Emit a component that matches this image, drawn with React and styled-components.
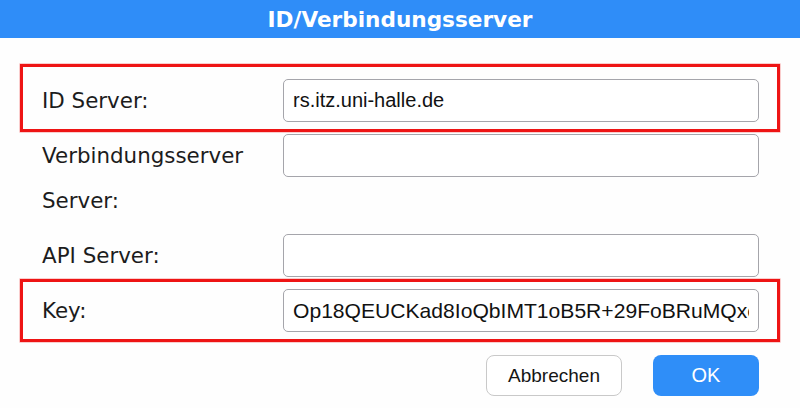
import React from "react";
import styled, { createGlobalStyle, css } from "styled-components";

const GlobalStyle = createGlobalStyle`
  html, body {
    margin: 0;
    padding: 0;
    background: #ffffff;
  }
  * { box-sizing: border-box; }
`;

const Dialog = styled.div`
  width: 800px;
  height: 408px;
  display: flex;
  flex-direction: column;
  background: #fefefe;
  overflow: hidden;
`;

const Header = styled.header`
  height: 38px;
  flex: 0 0 38px;
  display: flex;
  align-items: center;
  justify-content: center;
  background: #2f8df8;
  color: #ffffff;
  font-family: "DejaVu Sans", Verdana, sans-serif;
  font-weight: bold;
  font-size: 21.6px;
`;

const Body = styled.div`
  padding: 41px 41px 0 42px;
  display: flex;
  flex-direction: column;
`;

const Form = styled.div`
  display: flex;
  flex-direction: column;
  gap: 11px;
`;

const Row = styled.div`
  position: relative;
  display: grid;
  grid-template-columns: 241px 1fr;
  align-items: start;

  ${(p) =>
    p.$highlight &&
    css`
      &::before {
        content: "";
        position: absolute;
        top: ${-p.$highlight.top}px;
        bottom: ${-p.$highlight.bottom}px;
        left: -22px;
        right: -21px;
        border: 3px solid #ee1414;
        box-shadow: 0 0 0 0.6px rgba(238, 20, 20, 0.35);
        pointer-events: none;
      }
    `}
`;

const Label = styled.label`
  font-family: "DejaVu Sans", Verdana, sans-serif;
  font-size: 21.4px;
  line-height: 45px;
  margin-top: -1px;
  color: #1c1c1c;
`;

const Field = styled.input`
  width: 100%;
  height: 43px;
  border: 1.5px solid #a5a5ab;
  border-radius: 5px;
  padding: 0 9px;
  background: #ffffff;
  color: #111111;
  font-family: "Liberation Sans", Arial, sans-serif;
  font-size: ${(p) => p.$size || 20}px;
  outline: none;
`;

const Actions = styled.div`
  display: flex;
  justify-content: flex-end;
  gap: 31px;
  margin-top: 22px;
`;

const Button = styled.button`
  height: 41px;
  border-radius: 8px;
  font-family: "Liberation Sans", Arial, sans-serif;
  font-size: 19px;
  cursor: pointer;
  ${(p) =>
    p.$primary
      ? css`
          width: 106px;
          background: #2f8ef8;
          border: none;
          color: #ffffff;
          font-size: 20px;
        `
      : css`
          width: 136px;
          background: #ffffff;
          border: 1.5px solid #c9c9c9;
          color: #151515;
        `}
`;

const rows = [
  { label: "ID Server:", value: "rs.itz.uni-halle.de", highlight: { top: 15, bottom: 9 } },
  { label: "Verbindungsserver Server:", value: "" },
  { label: "API Server:", value: "" },
  {
    label: "Key:",
    value: "Op18QEUCKad8IoQbIMT1oB5R+29FoBRuMQxcYw7LpZ3k9Tq=",
    size: 21.1,
    highlight: { top: 10, bottom: 9 },
  },
];

export default function App() {
  return (
    <>
      <GlobalStyle />
      <Dialog>
        <Header>ID/Verbindungsserver</Header>
        <Body>
          <Form>
            {rows.map((r) => (
              <Row key={r.label} $highlight={r.highlight}>
                <Label>{r.label}</Label>
                <Field readOnly value={r.value} $size={r.size} />
              </Row>
            ))}
          </Form>
          <Actions>
            <Button>Abbrechen</Button>
            <Button $primary>OK</Button>
          </Actions>
        </Body>
      </Dialog>
    </>
  );
}
